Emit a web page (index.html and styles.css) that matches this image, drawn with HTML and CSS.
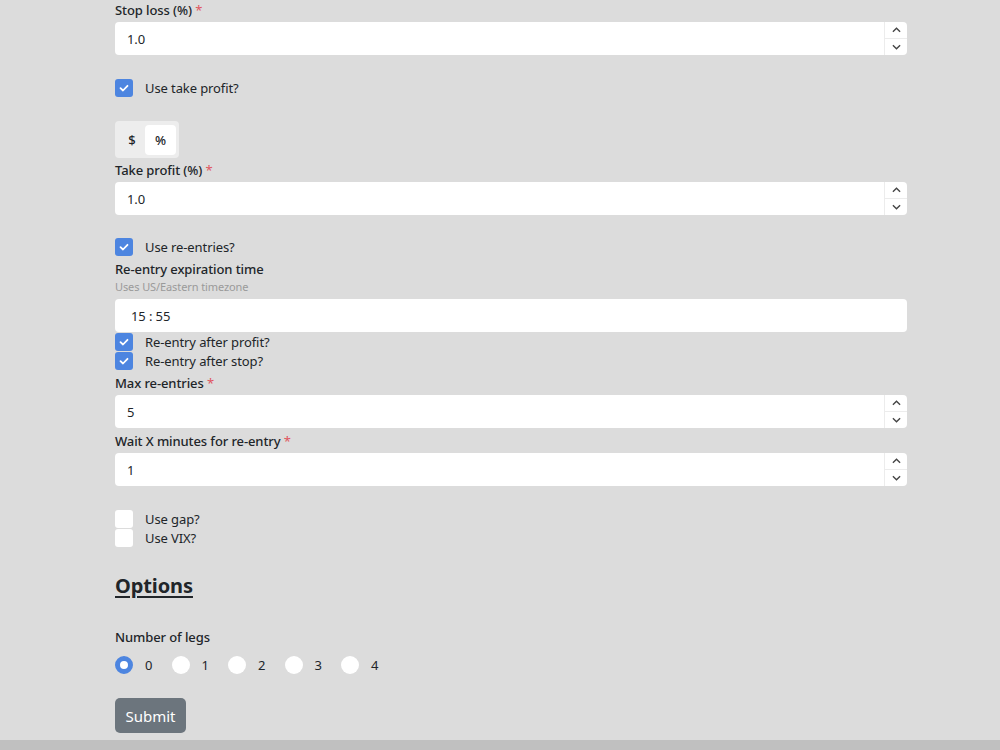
FILE: index.html
```html
<!DOCTYPE html>
<html>
<head>
<meta charset="utf-8">
<link rel="stylesheet" href="styles.css">
</head>
<body>
<div class="page">
  <form class="form">
    <div class="field">
      <label class="label">Stop loss (%) <span class="req">*</span></label>
      <div class="input number"><span class="value">1.0</span><span class="spin"><span class="up"><svg viewBox="0 0 10 6"><path d="M1 5 5 1 9 5"/></svg></span><span class="down"><svg viewBox="0 0 10 6"><path d="M1 1 5 5 9 1"/></svg></span></span></div>
    </div>

    <label class="check gap-top"><span class="box on"><svg viewBox="0 0 12 12"><path d="M2.5 6.2 5 8.5 9.5 3.8"/></svg></span>Use take profit?</label>

    <div class="toggle"><span class="opt">$</span><span class="opt active">%</span></div>

    <div class="field tight">
      <label class="label">Take profit (%) <span class="req">*</span></label>
      <div class="input number"><span class="value">1.0</span><span class="spin"><span class="up"><svg viewBox="0 0 10 6"><path d="M1 5 5 1 9 5"/></svg></span><span class="down"><svg viewBox="0 0 10 6"><path d="M1 1 5 5 9 1"/></svg></span></span></div>
    </div>

    <label class="check gap-top2"><span class="box on"><svg viewBox="0 0 12 12"><path d="M2.5 6.2 5 8.5 9.5 3.8"/></svg></span>Use re-entries?</label>

    <div class="field time-field">
      <label class="label">Re-entry expiration time</label>
      <div class="hint">Uses US/Eastern timezone</div>
      <div class="input time"><span class="value">15 : 55</span></div>
    </div>

    <div class="check-group">
      <label class="check"><span class="box on"><svg viewBox="0 0 12 12"><path d="M2.5 6.2 5 8.5 9.5 3.8"/></svg></span>Re-entry after profit?</label>
      <label class="check"><span class="box on"><svg viewBox="0 0 12 12"><path d="M2.5 6.2 5 8.5 9.5 3.8"/></svg></span>Re-entry after stop?</label>
    </div>

    <div class="field small-top">
      <label class="label">Max re-entries <span class="req">*</span></label>
      <div class="input number"><span class="value">5</span><span class="spin"><span class="up"><svg viewBox="0 0 10 6"><path d="M1 5 5 1 9 5"/></svg></span><span class="down"><svg viewBox="0 0 10 6"><path d="M1 1 5 5 9 1"/></svg></span></span></div>
    </div>

    <div class="field small-top">
      <label class="label">Wait X minutes for re-entry <span class="req">*</span></label>
      <div class="input number"><span class="value">1</span><span class="spin"><span class="up"><svg viewBox="0 0 10 6"><path d="M1 5 5 1 9 5"/></svg></span><span class="down"><svg viewBox="0 0 10 6"><path d="M1 1 5 5 9 1"/></svg></span></span></div>
    </div>

    <div class="check-group gap-top3">
      <label class="check"><span class="box"></span>Use gap?</label>
      <label class="check"><span class="box"></span>Use VIX?</label>
    </div>

    <h2 class="heading">Options</h2>

    <div class="legs">
      <div class="label">Number of legs</div>
      <div class="radios">
        <label class="radio"><span class="dot on"></span>0</label>
        <label class="radio"><span class="dot"></span>1</label>
        <label class="radio"><span class="dot"></span>2</label>
        <label class="radio"><span class="dot"></span>3</label>
        <label class="radio"><span class="dot"></span>4</label>
      </div>
    </div>

    <button type="button" class="submit">Submit</button>
  </form>
  <div class="footer-band"></div>
</div>
</body>
</html>
```
FILE: styles.css
```css
* { box-sizing: border-box; }

html, body {
  margin: 0;
  height: 100%;
  background: #dcdcdc;
  font-family: "Noto Sans", "Open Sans", sans-serif;
  color: #212529;
  font-size: 13px;
  overflow: hidden;
}

.page {
  display: flex;
  flex-direction: column;
  height: 750px;
}

.form {
  flex: 1;
  display: flex;
  flex-direction: column;
  width: 792px;
  margin-left: 115px;
  padding-top: 1px;
  letter-spacing: -0.1px;
}

.field { display: flex; flex-direction: column; }
.field.tight { margin-top: 3px; }
.field.small-top { margin-top: 4px; }

.label {
  font-weight: 500;
  font-size: 13px;
  line-height: 19px;
  height: 20px;
}

.req { color: #e0555f; font-weight: 400; }

.input {
  height: 33px;
  background: #fff;
  border-radius: 4px;
  display: flex;
  align-items: center;
  font-size: 13px;
  padding-left: 12px;
  margin-top: 1px;
}
.input .value { flex: 1; }

.spin {
  width: 23px;
  height: 100%;
  border-left: 1px solid #ececec;
  display: flex;
  flex-direction: column;
}
.spin span {
  flex: 1;
  display: flex;
  align-items: center;
  justify-content: center;
}
.spin .up { border-bottom: 1px solid #ececec; }
.spin svg {
  width: 9px;
  height: 6px;
  fill: none;
  stroke: #444;
  stroke-width: 1.5;
}

.check {
  display: flex;
  align-items: center;
  height: 18px;
  font-size: 13px;
  line-height: 18px;
}
.box {
  width: 18px;
  height: 18px;
  border-radius: 3px;
  background: #fff;
  margin-right: 12px;
  display: flex;
  align-items: center;
  justify-content: center;
}
.box.on { background: #4d85e0; }
.box svg {
  width: 12px;
  height: 12px;
  fill: none;
  stroke: #fff;
  stroke-width: 1.8;
  stroke-linecap: round;
  stroke-linejoin: round;
}

.gap-top { margin-top: 24px; }
.gap-top2 { margin-top: 23px; }
.gap-top3 { margin-top: 24px; }

.check-group { display: flex; flex-direction: column; gap: 1px; }

.toggle {
  margin-top: 24px;
  align-self: flex-start;
  display: flex;
  background: #ededed;
  border-radius: 4px;
  padding: 4px 3px 3px 4px;
  height: 37px;
}
.toggle .opt {
  width: 26px;
  display: flex;
  align-items: center;
  justify-content: center;
  font-size: 13px;
  font-weight: 500;
  border-radius: 4px;
}
.toggle .opt.active { background: #fff; width: 31px; }

.time-field { margin-top: 4px; }
.hint {
  font-size: 11px;
  color: #9a9a9a;
  line-height: 13px;
  height: 15px;
}
.input.time { margin-top: 4px; padding-left: 16px; font-size: 13px; }

.time-field + .check-group { margin-top: 1px; }

.heading {
  margin: 24px 0 0;
  font-size: 20px;
  font-weight: 700;
  text-decoration: underline;
  text-underline-offset: 3px;
  text-decoration-thickness: 2px;
  line-height: 30px;
}

.legs { margin-top: 27px; }
.legs .label { height: 22px; }
.radios {
  display: flex;
  margin-top: 6px;
}
.radio {
  display: flex;
  align-items: center;
  height: 18px;
  width: 56.5px;
  font-size: 13px;
}
.dot {
  width: 18px;
  height: 18px;
  border-radius: 50%;
  background: #fff;
  margin-right: 12px;
}
.dot.on {
  background: #fff;
  border: 5px solid #4d85e0;
}

.submit {
  margin-top: 24px;
  align-self: flex-start;
  width: 71px;
  height: 35px;
  background: #6c757d;
  color: #fff;
  border: none;
  border-radius: 5px;
  font-family: inherit;
  font-size: 15px;
  padding: 0;
}

.footer-band {
  height: 10px;
  background: #c0c0c0;
}
```
